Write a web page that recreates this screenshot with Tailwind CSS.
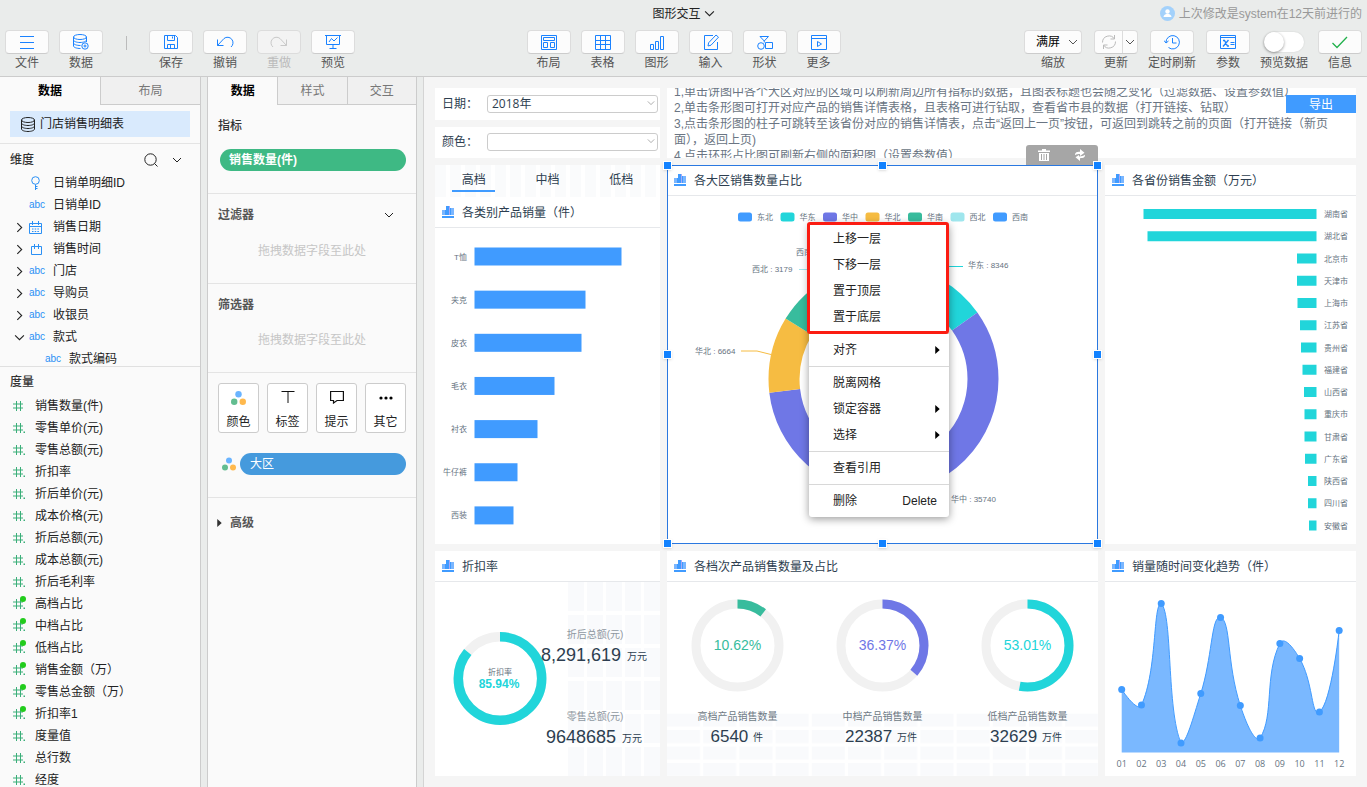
<!DOCTYPE html>
<html lang="zh-CN">
<head>
<meta charset="utf-8">
<meta name="viewport" content="width=device-width, initial-scale=1">
<title>图形交互</title>
<script src="https://cdn.jsdelivr.net/npm/@tailwindcss/browser@4"></script>
</head>
<body class="flex h-screen flex-col overflow-hidden bg-[#eaeceb] font-['Liberation_Sans','Noto_Sans_CJK_SC',sans-serif] text-xs leading-4 text-[#222]">

<svg class="hidden" aria-hidden="true">
  <symbol id="chev" viewBox="0 0 10 10"><path d="M1 3l4 4 4-4" fill="none" stroke="currentColor"/></symbol>
  <symbol id="chart" viewBox="0 0 12 12"><path d="M0 4h3v5H0zM9 2h3v7H9z" fill="#7ab6ff"/><path d="M3 4h1v5H3zM4 0h3v9H4zM8 2h1v7H8z" fill="#409bff"/><path d="M7 0h1v9H7z" fill="#a9a9f5"/><path d="M0 10h12v2H0z" fill="#409bff"/></symbol>
  <symbol id="dots3" viewBox="0 0 14 13"><circle cx="7" cy="3" r="3" fill="#6ab4ff"/><circle cx="3" cy="10" r="3" fill="#62bd90"/><circle cx="11" cy="10" r="3" fill="#ffb94d"/></symbol>
  <symbol id="db" viewBox="0 0 14 15"><g fill="none" stroke="currentColor"><ellipse cx="7" cy="3" rx="6.500" ry="2.500"/><path d="M.5 3v9c0 1.400 3 2.500 6.500 2.500s6.500-1.100 6.500-2.500V3M.5 6c0 1.400 3 2.500 6.500 2.500S13.500 7.400 13.500 6M.5 9c0 1.400 3 2.500 6.500 2.500s6.500-1.100 6.500-2.500"/></g></symbol>
  <symbol id="hash" viewBox="0 0 14 12"><path d="M3.500 1v10M7.500 1v10M0 4h10M0 8h10" fill="none" stroke="#3aae79"/></symbol>
  <symbol id="hashdot" viewBox="0 0 14 12"><path d="M3.500 1v10M7.500 1v10M0 4h10M0 8h10" fill="none" stroke="#3aae79"/><path d="M10.500 9.500H12V11h-1.500z" fill="#3aae79"/></symbol>
</svg>

<header class="shrink-0 border-b border-[#ccc]">
  <div class="grid h-[30px] grid-cols-[1fr_auto_1fr] px-[5px] pb-[3px]">
    <h1 class="col-start-2 flex items-center"><button class="flex items-center gap-[3px]">图形交互<svg class="size-[11px]"><use href="#chev"/></svg></button></h1>
    <p class="flex items-center justify-end gap-1 text-[#999]">
      <svg class="size-[15px]" viewBox="0 0 15 15"><circle cx="7.500" cy="7.500" r="7.500" fill="#a3d1fb"/><circle cx="7.500" cy="5.500" r="2.200" fill="#fff"/><path d="M3.500 11c0-2 2-3.300 4-3.300s4 1.300 4 3.300z" fill="#fff"/></svg>
      上次修改是system在12天前进行的</p>
  </div>
  <div class="grid h-[46px] grid-cols-[1fr_auto_1fr] px-[5px]">
    <nav class="flex items-start gap-[10px] text-[#555]" aria-label="文件工具">
      <button class="flex w-11 flex-col items-center gap-px"><span class="flex h-6 w-full items-center justify-center rounded border border-[#dcdcdc] border-b-[#ccc] bg-[#fcfcfc] text-[#1a82ff]"><svg class="size-4" viewBox="0 0 16 16" fill="none" stroke="currentColor"><path d="M1 2.500h14M1 8.500h14M1 14.500h14"/></svg></span><span class="whitespace-nowrap">文件</span></button>
      <button class="flex w-11 flex-col items-center gap-px"><span class="flex h-6 w-full items-center justify-center rounded border border-[#dcdcdc] border-b-[#ccc] bg-[#fcfcfc] text-[#1a82ff]"><svg class="size-4" viewBox="0 0 16 16" fill="none" stroke="currentColor"><ellipse cx="7" cy="3" rx="6.500" ry="2.500"/><path d="M.5 3v9c0 1.300 3 2.500 7 2.500M13.500 3v5M.5 6c0 1.300 3 2.500 6.500 2.500s6.500-1.200 6.500-2.500M.5 9c0 1.300 3 2.500 7 2.500"/><circle cx="12" cy="12" r="3.200"/><path d="M12 10.500v3M10.500 12h3"/></svg></span><span class="whitespace-nowrap">数据</span></button>
      <span class="mt-[6px] h-[14px] w-[26px]"><span class="mx-auto block h-full w-px bg-[#bbb]"></span></span>
      <button class="flex w-11 flex-col items-center gap-px"><span class="flex h-6 w-full items-center justify-center rounded border border-[#dcdcdc] border-b-[#ccc] bg-[#fcfcfc] text-[#1a82ff]"><svg class="size-4" viewBox="0 0 16 16" fill="none" stroke="currentColor"><path d="M1.500 1.500h11l2 2v11h-13zM4.500 1.500v5h7v-5M9.500 2.500v2M4.500 14.500v-4h7v4M7.500 11v3"/></svg></span><span class="whitespace-nowrap">保存</span></button>
      <button class="flex w-11 flex-col items-center gap-px"><span class="flex h-6 w-full items-center justify-center rounded border border-[#dcdcdc] border-b-[#ccc] bg-[#fcfcfc] text-[#1a82ff]"><svg class="h-4 w-[18px]" viewBox="0 0 18 16" fill="none" stroke="currentColor"><path d="M1.500 5.500v6h6M1.500 11.500l6.500-7a5.300 5.300 0 0 1 7 8.500"/></svg></span><span class="whitespace-nowrap">撤销</span></button>
      <button disabled class="flex w-11 flex-col items-center gap-px text-[#bbb]"><span class="flex h-6 w-full items-center justify-center rounded border border-[#dcdcdc] bg-[#f3f3f3] text-[#c8c8c8]"><svg class="h-4 w-[18px]" viewBox="0 0 18 16" fill="none" stroke="currentColor"><path d="M16.500 5.500v6h-6M16.500 11.500l-6.500-7a5.300 5.300 0 0 0-7 8.500"/></svg></span><span class="whitespace-nowrap">重做</span></button>
      <button class="flex w-11 flex-col items-center gap-px"><span class="flex h-6 w-full items-center justify-center rounded border border-[#dcdcdc] border-b-[#ccc] bg-[#fcfcfc] text-[#1a82ff]"><svg class="size-4" viewBox="0 0 16 16" fill="none" stroke="currentColor"><path d="M0 1.500h16M1.500 1.500v9h13v-9M8 10.500v4M4.500 14.500h7M4 8l2.500-3.500L9 7l3.500-3.500"/></svg></span><span class="whitespace-nowrap">预览</span></button>
    </nav>
    <nav class="flex items-start gap-[10px] text-[#555]" aria-label="插入组件">
      <button class="flex w-11 flex-col items-center gap-px"><span class="flex h-6 w-full items-center justify-center rounded border border-[#dcdcdc] border-b-[#ccc] bg-[#fcfcfc] text-[#1a82ff]"><svg class="size-4" viewBox="0 0 16 16" fill="none" stroke="currentColor"><path d="M.5 1.500h15v14H.5zM2.500 3.500h11v3h-11zM2.500 8.500h4v5h-4zM9.500 8.500h4v5h-4z"/></svg></span><span class="whitespace-nowrap">布局</span></button>
      <button class="flex w-11 flex-col items-center gap-px"><span class="flex h-6 w-full items-center justify-center rounded border border-[#dcdcdc] border-b-[#ccc] bg-[#fcfcfc] text-[#1a82ff]"><svg class="size-4" viewBox="0 0 16 16" fill="none" stroke="currentColor"><path d="M.5 1.500h15v14H.5zM.5 6.500h15M.5 10.500h15M5.500 1.500v14M10.500 1.500v14"/></svg></span><span class="whitespace-nowrap">表格</span></button>
      <button class="flex w-11 flex-col items-center gap-px"><span class="flex h-6 w-full items-center justify-center rounded border border-[#dcdcdc] border-b-[#ccc] bg-[#fcfcfc] text-[#1a82ff]"><svg class="size-4" viewBox="0 0 16 16" fill="none" stroke="currentColor"><path d="M1.500 10.500h3v5h-3zM6.500 7.500h3v8h-3zM11.500 2.500h3v13h-3z"/></svg></span><span class="whitespace-nowrap">图形</span></button>
      <button class="flex w-11 flex-col items-center gap-px"><span class="flex h-6 w-full items-center justify-center rounded border border-[#dcdcdc] border-b-[#ccc] bg-[#fcfcfc] text-[#1a82ff]"><svg class="size-4" viewBox="0 0 16 16" fill="none" stroke="currentColor"><path d="M10 1.500H1.500v14h13V8M13 1l2.500 2.200-7.500 8-3 .8.600-3.200z"/></svg></span><span class="whitespace-nowrap">输入</span></button>
      <button class="flex w-11 flex-col items-center gap-px"><span class="flex h-6 w-full items-center justify-center rounded border border-[#dcdcdc] border-b-[#ccc] bg-[#fcfcfc] text-[#1a82ff]"><svg class="size-4" viewBox="0 0 16 16" fill="none" stroke="currentColor"><path d="M3 2.500h8.500L7.250 7zM7.250 7v1.500M8.500 8.500h7v6h-7z"/><circle cx="4" cy="12" r="3.300"/></svg></span><span class="whitespace-nowrap">形状</span></button>
      <button class="flex w-11 flex-col items-center gap-px"><span class="flex h-6 w-full items-center justify-center rounded border border-[#dcdcdc] border-b-[#ccc] bg-[#fcfcfc] text-[#1a82ff]"><svg class="size-4" viewBox="0 0 16 16" fill="none" stroke="currentColor"><path d="M.5 1.500h15v14H.5zM.5 4.500h15M6.500 7.500v5l4-2.500z"/></svg></span><span class="whitespace-nowrap">更多</span></button>
    </nav>
    <div class="flex items-start justify-end gap-3 text-[#555]">
      <label class="relative flex w-[58px] flex-col items-center gap-px"><select class="h-6 w-full appearance-none rounded border border-[#dcdcdc] border-b-[#ccc] bg-[#fcfcfc] pl-[11px] text-black"><option>满屏</option></select><svg class="pointer-events-none absolute top-[7px] right-1 size-[10px]"><use href="#chev"/></svg><span>缩放</span></label>
      <button class="flex w-11 flex-col items-center gap-px"><span class="flex h-6 w-full items-center rounded border border-[#dcdcdc] border-b-[#ccc] bg-[#fcfcfc]"><span class="flex h-full w-7 items-center justify-center border-r border-[#dcdcdc] text-[#bbb]"><svg class="size-4" viewBox="0 0 16 16" fill="none" stroke="currentColor"><path d="M1.500 8.500A6.500 6.500 0 0 1 13.500 5M13.500 1v4h-4M14.500 7.500A6.500 6.500 0 0 1 2.500 11M2.500 15v-4h4"/></svg></span><svg class="ml-[2px] size-[10px]"><use href="#chev"/></svg></span><span class="whitespace-nowrap">更新</span></button>
      <button class="flex w-11 flex-col items-center gap-px"><span class="flex h-6 w-full items-center justify-center rounded border border-[#dcdcdc] border-b-[#ccc] bg-[#fcfcfc] text-[#1a82ff]"><svg class="size-4" viewBox="0 0 16 16" fill="none" stroke="currentColor"><path d="M2 8.500A6.700 6.700 0 1 1 4.500 13.500M0 6.500l2 2.500 2.500-2M8.500 4v5h4"/></svg></span><span class="whitespace-nowrap">定时刷新</span></button>
      <button class="flex w-11 flex-col items-center gap-px"><span class="flex h-6 w-full items-center justify-center rounded border border-[#dcdcdc] border-b-[#ccc] bg-[#fcfcfc] text-[#1a82ff]"><svg class="size-4" viewBox="0 0 16 16" fill="none" stroke="currentColor"><path d="M.5 1.500h15v13H.5zM.5 3.500h15M10.500 8.500h4M10.500 10.500h4"/><path d="M3 6.500h1.500l3 5.500H9M8.500 6L3 12.500" stroke-width="1.300"/></svg></span><span class="whitespace-nowrap">参数</span></button>
      <label class="flex w-11 flex-col items-center gap-px"><span class="flex h-6 items-center"><input type="checkbox" class="flex h-5 w-10 appearance-none rounded-full bg-white shadow-[0_0_2px_rgba(0,0,0,0.12)] before:size-5 before:rounded-full before:bg-white before:shadow-[0_1px_3px_rgba(0,0,0,0.4)]"></span><span class="whitespace-nowrap">预览数据</span></label>
      <button class="flex w-11 flex-col items-center gap-px"><span class="flex h-6 w-full items-center justify-center rounded border border-[#dcdcdc] border-b-[#ccc] bg-[#fcfcfc] text-[#22b14c]"><svg class="size-4" viewBox="0 0 16 16" fill="none" stroke="currentColor" stroke-width="1.300"><path d="M.5 9l4.500 4.500L15 3"/></svg></span><span class="whitespace-nowrap">信息</span></button>
    </div>
  </div>
</header>

<div class="flex min-h-0 flex-1">
  <!-- 数据集与字段 -->
  <aside class="flex w-[201px] shrink-0 flex-col overflow-hidden border-r border-[#ccc] bg-[#fafafa]">
    <div class="grid h-7 shrink-0 grid-cols-2">
      <button class="font-bold text-black">数据</button>
      <button class="border-b border-l border-[#ccc] bg-[#f0f0f0] text-[#777]">布局</button>
    </div>
    <div class="h-[39px] shrink-0 border-b border-[#e4e4e4] px-[10px] pt-[6px]">
      <button class="flex h-[26px] w-full items-center gap-[5px] bg-[#d9eafd] pl-[11px]"><svg class="h-[15px] w-[14px]"><use href="#db"/></svg>门店销售明细表</button>
    </div>
    <section class="h-[222px] shrink-0 overflow-hidden">
      <div class="flex h-7 items-center pt-1 pr-[18px] pl-[10px]">
        <h2 class="flex-1 font-medium text-[#333]">维度</h2>
        <button aria-label="搜索"><svg class="mr-[14px] size-[14px]" viewBox="0 0 14 14" fill="none" stroke="currentColor"><circle cx="6.500" cy="6.500" r="5.700"/><path d="M10.500 10.500l3 3"/></svg></button>
        <button aria-label="展开"><svg class="size-[10px]"><use href="#chev"/></svg></button>
      </div>
      <ul id="dims"></ul>
    </section>
    <section class="min-h-0 flex-1 overflow-hidden border-t border-[#e0e0e0]">
      <h2 class="flex h-7 items-center pt-px pl-[10px] font-medium text-[#333]">度量</h2>
      <ul id="measures"></ul>
    </section>
  </aside>

  <!-- 图表绑定 -->
  <aside class="ml-[6px] w-[210px] shrink-0 overflow-hidden border-x border-[#ccc] bg-[#fafafa]">
    <div class="grid h-7 grid-cols-3">
      <button class="font-bold text-black">数据</button>
      <button class="border-b border-l border-[#ccc] bg-[#f0f0f0] text-[#777]">样式</button>
      <button class="border-b border-l border-[#ccc] bg-[#f0f0f0] text-[#777]">交互</button>
    </div>
    <section class="h-[89px] border-b border-[#e4e4e4] px-[10px] pt-[13px]">
      <h2 class="font-medium text-[#333]">指标</h2>
      <button class="mt-[15px] ml-[2px] flex h-[22px] w-[186px] items-center rounded-full bg-[#3eb984] px-[9px] font-bold text-white">销售数量(件)</button>
    </section>
    <section class="h-[90px] border-b border-[#e4e4e4] px-[10px] pt-[13px]">
      <div class="flex items-center justify-between pr-3"><h2 class="font-bold text-[#555]">过滤器</h2><button aria-label="展开过滤器"><svg class="size-[10px]"><use href="#chev"/></svg></button></div>
      <p class="mt-5 text-center text-[#c6c6c6]">拖拽数据字段至此处</p>
    </section>
    <section class="h-[89px] border-b border-[#e4e4e4] px-[10px] pt-[13px]">
      <h2 class="font-bold text-[#555]">筛选器</h2>
      <p class="mt-[19px] text-center text-[#c6c6c6]">拖拽数据字段至此处</p>
    </section>
    <section class="h-[125px] border-b border-[#e4e4e4] px-[10px] pt-[10px]">
      <div class="grid grid-cols-4 gap-2">
        <button class="flex h-[50px] flex-col items-center justify-between rounded-[3px] border border-[#ccc] bg-white pt-[7px] pb-[2px]"><svg class="h-[14px] w-[15px]"><use href="#dots3"/></svg>颜色</button>
        <button class="flex h-[50px] flex-col items-center justify-between rounded-[3px] border border-[#ccc] bg-white pt-[6px] pb-[2px]"><svg class="size-[14px]" viewBox="0 0 14 14" fill="none" stroke="#111"><path d="M.5 1.500h13M7 1.500V13"/></svg>标签</button>
        <button class="flex h-[50px] flex-col items-center justify-between rounded-[3px] border border-[#ccc] bg-white pt-[6px] pb-[2px]"><svg class="size-[14px]" viewBox="0 0 14 14" fill="none" stroke="#111" stroke-width="1.200"><path d="M.6 1.500h12.800v9H7L3.500 13v-2.500H.6z"/></svg>提示</button>
        <button class="flex h-[50px] flex-col items-center justify-between rounded-[3px] border border-[#ccc] bg-white pt-[6px] pb-[2px]"><svg class="size-[14px]" viewBox="0 0 14 14"><circle cx="2" cy="8" r="1.600"/><circle cx="7" cy="8" r="1.600"/><circle cx="12" cy="8" r="1.600"/></svg>其它</button>
      </div>
      <div class="mt-5 flex items-center gap-1 pl-1"><svg class="h-[14px] w-[14px]"><use href="#dots3"/></svg><button class="flex h-[22px] flex-1 items-center rounded-full bg-[#459add] px-[10px] text-white">大区</button></div>
    </section>
    <button class="flex h-[50px] items-center gap-2 pl-[9px] font-bold text-[#555]"><svg class="h-[8px] w-[5px]" viewBox="0 0 5 9"><path d="M0 0l5 4.500L0 9z" fill="#333"/></svg>高级</button>
  </aside>

  <!-- 画布 -->
  <main class="ml-[6px] grid min-w-0 flex-1 grid-cols-[225fr_431fr_251fr] grid-rows-[70px_379fr_225fr] gap-[7px] border-l border-[#d4d4d4] bg-[#f5f5f5] p-[11px] text-[#2d3e50]">
    <div class="flex flex-col gap-[7px]">
      <label class="flex flex-1 items-center bg-white pr-[2px] pl-[7px]"><span class="w-[45px]">日期：</span><span class="relative flex-1"><select class="block h-[18px] w-full appearance-none rounded-[3px] border border-[#ccc] pl-1 font-['Open_Sans','Noto_Sans_CJK_SC',sans-serif] leading-4"><option>2018年</option></select><svg class="pointer-events-none absolute top-1 right-[3px] size-2 text-[#999]"><use href="#chev"/></svg></span></label>
      <label class="flex flex-1 items-center bg-white pr-[2px] pl-[7px]"><span class="w-[45px]">颜色：</span><span class="relative flex-1"><select class="block h-[18px] w-full appearance-none rounded-[3px] border border-[#ccc] pl-1 leading-4"><option></option></select><svg class="pointer-events-none absolute top-1 right-[3px] size-2 text-[#999]"><use href="#chev"/></svg></span></label>
    </div>

    <div class="relative col-span-2 min-h-0 overflow-hidden bg-white">
      <div class="-mt-1 pr-6 pl-[7px] text-[#6a7583]">
        <p>1,单击饼图中各个大区对应的区域可以刷新周边所有指标的数据，且图表标题也会随之变化（过滤数据、设置参数值）</p>
        <p>2,单击条形图可打开对应产品的销售详情表格，且表格可进行钻取，查看省市县的数据（打开链接、钻取）</p>
        <p>3,点击条形图的柱子可跳转至该省份对应的销售详情表，点击“返回上一页”按钮，可返回到跳转之前的页面（打开链接（新页面），返回上页)</p>
        <p>4,点击环形占比图可刷新右侧的面积图（设置参数值）</p>
      </div>
      <button class="absolute top-[7px] right-0 flex h-[18px] w-[70px] items-center justify-center bg-[#409bff] pt-px text-white">导出</button>
    </div>

    <!-- 各类别产品销量 -->
    <section class="flex min-h-0 flex-col bg-white">
      <div class="grid h-8 shrink-0 grid-cols-3 items-start bg-[repeating-linear-gradient(90deg,#fafbfc_0_11px,#fff_11px_15px)] px-[2px]">
        <button class="mx-auto h-[27px] w-[43px] border-b-2 border-[#409bff] pt-1">高档</button>
        <button class="mx-auto h-[27px] pt-[2px]">中档</button>
        <button class="mx-auto h-[27px] pt-[2px]">低档</button>
      </div>
      <h2 class="flex h-[31px] shrink-0 items-center gap-2 border-b border-[#e6e8eb] pt-px pl-[7px]"><svg class="mb-[2px] size-3"><use href="#chart"/></svg>各类别产品销量（件）</h2>
      <div class="min-h-0 flex-1"><svg id="catChart" class="h-full w-full" viewBox="435 228 225 316" fill="#409bff"></svg></div>
    </section>

    <!-- 各大区销售数量占比 -->
    <section class="relative flex min-h-0 flex-col bg-white">
      <h2 class="flex h-[31px] shrink-0 items-center gap-2 border-b border-[#e6e8eb] pt-px pl-[7px]"><svg class="mb-[2px] size-3"><use href="#chart"/></svg>各大区销售数量占比</h2>
      <div class="min-h-0 flex-1">
        <svg class="h-full w-full" viewBox="667 196 431 348" font-size="8">
          <g fill="none" stroke-width="31" transform="rotate(-90 883.500 379)">
            <circle cx="883.500" cy="379" r="99.500" pathLength="360" stroke="#409bff" stroke-dasharray="10 360"/>
            <circle cx="883.500" cy="379" r="99.500" pathLength="360" stroke="#21d5da" stroke-dasharray="48.700 360" stroke-dashoffset="-6"/>
            <circle cx="883.500" cy="379" r="99.500" pathLength="360" stroke="#6f77e6" stroke-dasharray="208.400 360" stroke-dashoffset="-54.700"/>
            <circle cx="883.500" cy="379" r="99.500" pathLength="360" stroke="#f6bc42" stroke-dasharray="38.600 360" stroke-dashoffset="-263.100"/>
            <circle cx="883.500" cy="379" r="99.500" pathLength="360" stroke="#38bc9d" stroke-dasharray="30 360" stroke-dashoffset="-301.700"/>
            <circle cx="883.500" cy="379" r="99.500" pathLength="360" stroke="#9fe6ed" stroke-dasharray="18.500 360" stroke-dashoffset="-331.700"/>
          </g>
          <g fill="none"><path d="M930 272l18-5.500h15" stroke="#21d5da"/><path d="M799 269.500h14" stroke="#9fe6ed"/><path d="M741 351h16l14 3.500" stroke="#f6bc42"/></g>
          <g fill="#66737f">
            <text x="968" y="268">华东 : 8346</text><text x="752" y="272">西北 : 3179</text><text x="796" y="255">西南 : 2100</text><text x="695" y="354">华北 : 6664</text><text x="951" y="502">华中 : 35740</text>
          </g>
          <g id="legend"></g>
        </svg>
      </div>
      <!-- 组件工具条与选中框 -->
      <div class="absolute right-0 bottom-full flex h-5 w-[72px] items-center justify-around rounded-t-[3px] bg-[#a6a6a6] text-white">
        <button aria-label="删除组件"><svg class="size-3" viewBox="0 0 12 12"><path d="M4 0h4v1.500h4V3H0V1.500h4zM1 4h10v8H1z" fill="currentColor"/><path d="M3.500 5v6M6 5v6M8.500 5v6" stroke="#a6a6a6" fill="none"/></svg></button>
        <button aria-label="切换"><svg class="size-3" viewBox="0 0 12 12"><path d="M1 6.200C1 3.500 2.500 2.800 6 2.800V0l4.500 3.800L6 7V5C4 5 2.500 5 1 6.200zM11 5.800c0 2.700-1.500 3.400-5 3.400V12L1.500 8.200 5 6v1.500c2.500 0 4.500-.5 6-1.700z" fill="currentColor"/></svg></button>
      </div>
      <div class="pointer-events-none absolute inset-0 border border-[#2a78e0]">
        <i class="absolute -top-[5px] -left-[5px] size-[9px] border border-white bg-[#1282ff] shadow"></i>
        <i class="absolute -top-[5px] left-1/2 -ml-[5px] size-[9px] border border-white bg-[#1282ff] shadow"></i>
        <i class="absolute -top-[5px] -right-[5px] size-[9px] border border-white bg-[#1282ff] shadow"></i>
        <i class="absolute top-1/2 -left-[5px] -mt-[5px] size-[9px] border border-white bg-[#1282ff] shadow"></i>
        <i class="absolute top-1/2 -right-[5px] -mt-[5px] size-[9px] border border-white bg-[#1282ff] shadow"></i>
        <i class="absolute -bottom-[5px] -left-[5px] size-[9px] border border-white bg-[#1282ff] shadow"></i>
        <i class="absolute -bottom-[5px] left-1/2 -ml-[5px] size-[9px] border border-white bg-[#1282ff] shadow"></i>
        <i class="absolute -right-[5px] -bottom-[5px] size-[9px] border border-white bg-[#1282ff] shadow"></i>
      </div>

      <!-- 右键菜单 -->
      <div role="menu" class="absolute top-[58px] left-[142px] w-[140px] divide-y divide-[#d8d8d8] rounded-[3px] bg-white text-[#222] shadow-[0_2px_8px_rgba(0,0,0,0.4)]">
        <div class="py-[3px]">
          <button role="menuitem" class="flex h-[26px] w-full items-center px-6">上移一层</button>
          <button role="menuitem" class="flex h-[26px] w-full items-center px-6">下移一层</button>
          <button role="menuitem" class="flex h-[26px] w-full items-center px-6">置于顶层</button>
          <button role="menuitem" class="flex h-[26px] w-full items-center px-6">置于底层</button>
        </div>
        <div class="py-[3px]">
          <button role="menuitem" class="flex h-[26px] w-full items-center justify-between pr-[9px] pl-6">对齐<svg class="h-2 w-[5px]" viewBox="0 0 5 9"><path d="M0 0l5 4.500L0 9z"/></svg></button>
        </div>
        <div class="py-[3px]">
          <button role="menuitem" class="flex h-[26px] w-full items-center px-6">脱离网格</button>
          <button role="menuitem" class="flex h-[26px] w-full items-center justify-between pr-[9px] pl-6">锁定容器<svg class="h-2 w-[5px]" viewBox="0 0 5 9"><path d="M0 0l5 4.500L0 9z"/></svg></button>
          <button role="menuitem" class="flex h-[26px] w-full items-center justify-between pr-[9px] pl-6">选择<svg class="h-2 w-[5px]" viewBox="0 0 5 9"><path d="M0 0l5 4.500L0 9z"/></svg></button>
        </div>
        <div class="py-[3px]"><button role="menuitem" class="flex h-[26px] w-full items-center px-6">查看引用</button></div>
        <div class="py-[3px]"><button role="menuitem" class="flex h-[26px] w-full items-center justify-between pr-3 pl-6">删除<span>Delete</span></button></div>
      </div>
      <div class="pointer-events-none absolute top-[57px] left-[140px] h-[112px] w-[142px] rounded-[3px] border-3 border-[#fb1c12]"></div>
    </section>

    <!-- 各省份销售金额 -->
    <section class="flex min-h-0 flex-col bg-white">
      <h2 class="flex h-[31px] shrink-0 items-center gap-2 border-b border-[#e6e8eb] pt-px pl-[7px]"><svg class="mb-[2px] size-3"><use href="#chart"/></svg>各省份销售金额（万元）</h2>
      <div class="min-h-0 flex-1"><svg id="provChart" class="h-full w-full" viewBox="1105 196 251 348" fill="#21d5da"></svg></div>
    </section>

    <!-- 折扣率 -->
    <section class="flex min-h-0 flex-col bg-white">
      <h2 class="flex h-[31px] shrink-0 items-center gap-2 border-b border-[#e6e8eb] pt-px pl-[7px]"><svg class="mb-[2px] size-3"><use href="#chart"/></svg>折扣率</h2>
      <div class="min-h-0 flex-1">
        <svg class="h-full w-full" viewBox="435 582 225 194">
          <defs><pattern id="gridA" x="568" y="582" width="19" height="33" patternUnits="userSpaceOnUse"><path d="M0 0h16v29H0z" fill="#f9fafc"/></pattern></defs>
          <path d="M568 582h92v194h-92z" fill="url(#gridA)"/>
          <g fill="none" stroke-width="9.500"><circle cx="500" cy="678.500" r="41.700" stroke="#f1f1f1"/><circle cx="500" cy="678.500" r="41.700" stroke="#21d5da" pathLength="100" stroke-dasharray="85.940 100" transform="rotate(-90 500 678.500)"/></g>
          <text x="500" y="675" font-size="8" text-anchor="middle" fill="#66737f">折扣率</text>
          <text x="499" y="688" font-size="12" font-weight="bold" text-anchor="middle" fill="#21d5da">85.94%</text>
          <g font-size="10" fill="#8f98a1" text-anchor="middle"><text x="595" y="638">折后总额(元)</text><text x="595" y="720">零售总额(元)</text></g>
          <g font-size="18" fill="#2d3e50"><text x="541" y="661">8,291,619</text><text x="546" y="743">9648685</text></g>
          <g font-size="10" fill="#2d3e50"><text x="627" y="660">万元</text><text x="622" y="742">万元</text></g>
        </svg>
      </div>
    </section>

    <!-- 各档次产品 -->
    <section class="flex min-h-0 flex-col bg-white">
      <h2 class="flex h-[31px] shrink-0 items-center gap-2 border-b border-[#e6e8eb] pt-px pl-[7px]"><svg class="mb-[2px] size-3"><use href="#chart"/></svg>各档次产品销售数量及占比</h2>
      <div class="min-h-0 flex-1">
        <svg class="h-full w-full" viewBox="667 582 431 194">
          <defs><pattern id="gridB" x="667" y="713.500" width="36.200" height="16.500" patternUnits="userSpaceOnUse"><path d="M0 0h33v13H0z" fill="#f9fafc"/></pattern></defs>
          <path d="M667 713.500h431V776H667z" fill="url(#gridB)"/>
          <g fill="none" stroke="#f1f1f1" stroke-width="9"><circle cx="737.500" cy="645.500" r="41.500"/><circle cx="882.500" cy="645.500" r="41.500"/><circle cx="1027.500" cy="645.500" r="41.500"/></g>
          <g fill="none" stroke-width="9">
            <circle cx="737.500" cy="645.500" r="41.500" pathLength="100" stroke="#38bc9d" stroke-dasharray="10.620 100" transform="rotate(-90 737.500 645.500)"/>
            <circle cx="882.500" cy="645.500" r="41.500" pathLength="100" stroke="#6f77e6" stroke-dasharray="36.370 100" transform="rotate(-90 882.500 645.500)"/>
            <circle cx="1027.500" cy="645.500" r="41.500" pathLength="100" stroke="#21d5da" stroke-dasharray="53.010 100" transform="rotate(-90 1027.500 645.500)"/>
          </g>
          <g font-size="14" text-anchor="middle"><text x="737.500" y="650" fill="#38bc9d">10.62%</text><text x="882.500" y="650" fill="#6f77e6">36.37%</text><text x="1027.500" y="650" fill="#21d5da">53.01%</text></g>
          <g font-size="10" text-anchor="middle" fill="#6f7a85"><text x="737.500" y="720">高档产品销售数量</text><text x="882.500" y="720">中档产品销售数量</text><text x="1027.500" y="720">低档产品销售数量</text></g>
          <g font-size="17" fill="#2d3e50"><text x="710.500" y="742">6540</text><text x="845" y="742">22387</text><text x="990" y="742">32629</text></g>
          <g font-size="10" fill="#2d3e50"><text x="753" y="741">件</text><text x="897" y="741">万件</text><text x="1042" y="741">万件</text></g>
        </svg>
      </div>
    </section>

    <!-- 销量趋势 -->
    <section class="flex min-h-0 flex-col bg-white">
      <h2 class="flex h-[31px] shrink-0 items-center gap-2 border-b border-[#e6e8eb] pt-px pl-[7px]"><svg class="mb-[2px] size-3"><use href="#chart"/></svg>销量随时间变化趋势（件）</h2>
      <div class="min-h-0 flex-1"><svg id="trend" class="h-full w-full" viewBox="1105 582 251 194"></svg></div>
    </section>
  </main>
</div>

<script>
const $ = id => document.getElementById(id);

// 维度树
const glyph = {
  key: '<svg class="h-[14px] w-[13px]" viewBox="0 0 13 14" fill="none" stroke="#2b90f5"><circle cx="6.500" cy="4.500" r="3.800"/><path d="M6.500 8.500V14M6.500 10.500h2M6.500 12.500h2"/></svg>',
  abc: 'abc',
  date: '<svg class="size-[13px]" viewBox="0 0 13 13" fill="none" stroke="#2b90f5"><path d="M.5 2.500h12v10H.5zM.5 5.500h12M3.500 0v4M9.500 0v4"/><path d="M3 8h7M3 10.500h7" stroke-dasharray="1.500 1.200"/></svg>',
  time: '<svg class="mx-auto size-[11px]" viewBox="0 0 11 11" fill="none" stroke="#2b90f5"><path d="M.5 2.500h10v8H.5zM3.500 0v5M7.500 0v5"/></svg>'
};
$('dims').innerHTML = [['','key','日销单明细ID'],['','abc','日销单ID'],['r','date','销售日期'],['r','time','销售时间'],['r','abc','门店'],['r','abc','导购员'],['r','abc','收银员'],['d','abc','款式'],['sub','abc','款式编码']].map(([s,g,t]) =>
  `<li class="flex h-[22px] items-center ${s === 'sub' ? 'pl-[30px]' : 'pl-[14px]'}"><span class="w-[15px]">${s === 'r' ? '<svg class="size-[11px] -rotate-90"><use href="#chev"/></svg>' : s === 'd' ? '<svg class="size-[11px]"><use href="#chev"/></svg>' : ''}</span><span class="w-6 text-[10px] text-[#2b90f5]"><span class="block w-[15px]">${glyph[g]}</span></span>${t}</li>`).join('');

// 度量列表
$('measures').innerHTML = ['销售数量(件)','零售单价(元)','零售总额(元)','折扣率','折后单价(元)','成本价格(元)','折后总额(元)','成本总额(元)','折后毛利率','高档占比','中档占比','低档占比','销售金额（万）','零售总金额（万）','折扣率1','度量值','总行数','经度'].map((t, i) =>
  `<li class="flex h-[22px] items-center gap-2 pl-[13px]"><span class="relative"><svg class="h-3 w-[14px]"><use href="${i ? '#hashdot' : '#hash'}"/></svg>${i > 8 && i < 15 ? '<i class="absolute -top-[2px] right-px size-[6px] rounded-full bg-[#22cc1c]"></i>' : ''}</span>${t}</li>`).join('');

// 类别条形图
$('catChart').innerHTML = [['T恤',147],['夹克',111],['皮衣',107],['毛衣',80],['衬衣',63],['牛仔裤',43],['西装',39]].map(([t, w], i) => {
  const y = 256.5 + i * 43.15;
  return `<rect x="474.500" y="${y - 9}" width="${w}" height="18"/><text x="467" y="${y + 3}" font-size="8" text-anchor="end" fill="#66737f">${t}</text>`;
}).join('');

// 省份条形图
$('provChart').innerHTML = [['湖南省',173],['湖北省',169],['北京市',19.5],['天津市',19.5],['上海市',19],['江苏省',16.5],['贵州省',15.5],['福建省',14],['山西省',12.5],['重庆市',12],['甘肃省',12],['广东省',11.5],['陕西省',8.5],['四川省',8.5],['安徽省',7.5]].map(([t, w], i) => {
  const y = 214 + i * 22.25;
  return `<rect x="${1316.5 - w}" y="${y - 5}" width="${w}" height="10"/><text x="1324" y="${y + 3}" font-size="8" fill="#66737f">${t}</text>`;
}).join('');

// 图例
$('legend').innerHTML = [['东北','#409bff'],['华东','#21d5da'],['华中','#6f77e6'],['华北','#f6bc42'],['华南','#38bc9d'],['西北','#9fe6ed'],['西南','#409bff']].map(([t, c], i) => {
  const x = 738 + i * 42.5;
  return `<rect x="${x}" y="212.500" width="14" height="9" rx="2.500" fill="${c}"/><text x="${x + 19}" y="219.500" fill="#66737f">${t}</text>`;
}).join('');

// 平滑面积图
const pts = [689.5,705,603.5,743,693.5,617.5,705.5,738,643.5,658.5,712,630.5].map((y, i) => [1121.7 + i * 19.77, y]);
const dist = (a, b) => Math.hypot(a[0] - b[0], a[1] - b[1]);
const clamp = y => Math.min(743, Math.max(603.5, y));
const ctrl = pts.map((p, i) => {
  const a = pts[i - 1], b = pts[i + 1];
  if (!a || !b) return [p, p];
  const r = dist(p, b) / (dist(a, p) + dist(p, b)), vx = (b[0] - a[0]) * .5, vy = (b[1] - a[1]) * .5;
  return [[p[0] - vx * (1 - r), clamp(p[1] - vy * (1 - r))], [p[0] + vx * r, clamp(p[1] + vy * r)]];
});
const curve = 'M' + pts[0] + pts.slice(1).map((p, i) => `C${ctrl[i][1]} ${ctrl[i + 1][0]} ${p}`).join('');
$('trend').innerHTML = `<path d="${curve}V752.5H1121.7Z" fill="#7ab8ff"/><path d="${curve}" fill="none" stroke="#409bff"/>` + pts.map(([x, y], i) =>
  `<circle cx="${x}" cy="${y}" r="3.500" fill="#409bff"/><text x="${x}" y="767" font-size="9" text-anchor="middle" fill="#66737f" font-family="Open Sans">${String(i + 1).padStart(2, '0')}</text>`).join('');
</script>
</body>
</html>
